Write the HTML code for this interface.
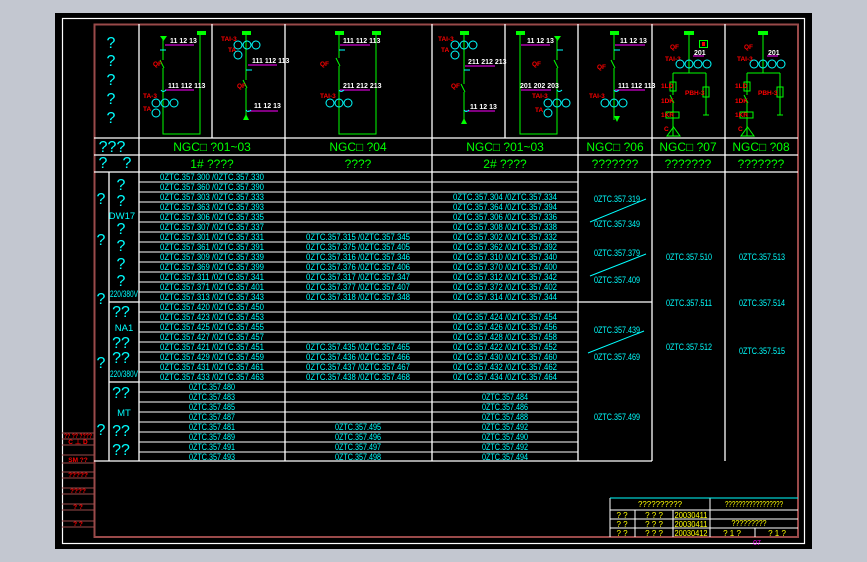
<!DOCTYPE html>
<html><head><meta charset="utf-8"><style>
html,body{margin:0;padding:0;background:#c3c7d0;}
svg{display:block;}
text{font-family:"Liberation Sans","Noto Sans CJK SC",sans-serif;}
.c{fill:#00ffff;font-size:9.5px;}
.g{fill:#00ff00;font-size:12px;}
.w{fill:#fff;font-size:7px;font-weight:bold;}
.r{fill:#ff0000;font-size:6.5px;font-weight:bold;}
.y{fill:#ffff00;font-size:8px;}
.q{fill:#00ffff;font-size:16px;}
</style></head><body>
<svg width="867" height="562" viewBox="0 0 867 562" xmlns="http://www.w3.org/2000/svg">
<rect x="0" y="0" width="867" height="562" fill="#c3c7d0"/>
<rect x="55" y="13" width="757" height="536" fill="#000"/>
<rect x="62.5" y="18.5" width="742" height="525" fill="none" stroke="#fff" stroke-width="1.2"/>
<rect x="94.5" y="24.5" width="703.5" height="512.5" fill="none" stroke="#9a4a4a" stroke-width="2"/>

<g stroke="#9a4a4a" stroke-width="1">
<line x1="62" y1="433" x2="94" y2="433"/><line x1="62" y1="439" x2="94" y2="439"/><line x1="62" y1="445" x2="94" y2="445"/>
<line x1="62" y1="455" x2="94" y2="455"/><line x1="62" y1="463" x2="94" y2="463"/><line x1="62" y1="472" x2="94" y2="472"/>
<line x1="62" y1="478" x2="94" y2="478"/><line x1="62" y1="488" x2="94" y2="488"/><line x1="62" y1="494" x2="94" y2="494"/>
<line x1="62" y1="504" x2="94" y2="504"/><line x1="62" y1="510" x2="94" y2="510"/><line x1="62" y1="521" x2="94" y2="521"/>
<line x1="62" y1="527" x2="94" y2="527"/>
</g>
<text class="r" x="78" y="438" text-anchor="middle" textLength="28" lengthAdjust="spacingAndGlyphs">?? ?? ????</text>
<text class="r" x="78" y="444" text-anchor="middle">C ⊥ D</text>
<text class="r" x="78" y="462" text-anchor="middle">SM   ??</text>
<text class="r" x="78" y="477" text-anchor="middle">?????</text>
<text class="r" x="78" y="493" text-anchor="middle">????</text>
<text class="r" x="78" y="509" text-anchor="middle">?   ?</text>
<text class="r" x="78" y="526" text-anchor="middle">?   ?</text>

<g stroke="#fff" stroke-width="1.3">
<line x1="139" y1="24" x2="139" y2="461"/>
<line x1="212" y1="24" x2="212" y2="138"/>
<line x1="285" y1="24" x2="285" y2="461"/>
<line x1="432" y1="24" x2="432" y2="461"/>
<line x1="505" y1="24" x2="505" y2="138"/>
<line x1="578" y1="24" x2="578" y2="461"/>
<line x1="652" y1="24" x2="652" y2="461"/>
<line x1="725" y1="24" x2="725" y2="461"/>
<line x1="94" y1="138" x2="798" y2="138"/>
<line x1="94" y1="155" x2="798" y2="155"/>
<line x1="94" y1="172" x2="798" y2="172"/>
<line x1="109" y1="172" x2="109" y2="461"/>
<line x1="109" y1="302" x2="139" y2="302"/>
<line x1="109" y1="382" x2="139" y2="382"/>
<line x1="578" y1="302" x2="652" y2="302"/>
<line x1="94" y1="461" x2="652" y2="461"/>
</g>
<g stroke="#fff" stroke-width="1">
<path d="M139 182H578M139 192H578M139 202H578M139 212H578M139 222H578M139 232H578M139 242H578M139 252H578M139 262H578M139 272H578M139 282H578M139 292H578M139 302H578M139 312H578M139 322H578M139 332H578M139 342H578M139 352H578M139 362H578M139 372H578M139 382H578M139 392H578M139 402H578M139 412H578M139 422H578M139 432H578M139 442H578M139 452H578"/>
</g>

<text class="q" x="112" y="152" text-anchor="middle" font-size="13">???</text>
<text class="g" x="212" y="151" text-anchor="middle">NGC□ ?01~03</text>
<text class="g" x="358" y="151" text-anchor="middle">NGC□ ?04</text>
<text class="g" x="505" y="151" text-anchor="middle">NGC□ ?01~03</text>
<text class="g" x="615" y="151" text-anchor="middle">NGC□ ?06</text>
<text class="g" x="688" y="151" text-anchor="middle">NGC□ ?07</text>
<text class="g" x="761" y="151" text-anchor="middle">NGC□ ?08</text>
<text class="q" x="103" y="168" text-anchor="middle" font-size="13">?</text>
<text class="q" x="127" y="168" text-anchor="middle" font-size="13">?</text>
<text class="g" x="212" y="168" text-anchor="middle">1# ????</text>
<text class="g" x="358" y="168" text-anchor="middle">????</text>
<text class="g" x="505" y="168" text-anchor="middle">2# ????</text>
<text class="g" x="615" y="168" text-anchor="middle">???????</text>
<text class="g" x="688" y="168" text-anchor="middle">???????</text>
<text class="g" x="761" y="168" text-anchor="middle">???????</text>

<text class="q" x="111" y="48" text-anchor="middle">?</text>
<text class="q" x="111" y="66" text-anchor="middle">?</text>
<text class="q" x="111" y="85" text-anchor="middle">?</text>
<text class="q" x="111" y="104" text-anchor="middle">?</text>
<text class="q" x="111" y="123" text-anchor="middle">?</text>

<text class="q" x="101" y="204" text-anchor="middle">?</text>
<text class="q" x="101" y="245" text-anchor="middle">?</text>
<text class="q" x="101" y="304" text-anchor="middle">?</text>
<text class="q" x="101" y="368" text-anchor="middle">?</text>
<text class="q" x="101" y="435" text-anchor="middle">?</text>
<text class="q" x="121" y="190" text-anchor="middle">?</text>
<text class="q" x="121" y="206" text-anchor="middle">?</text>
<text class="c" x="122" y="219" text-anchor="middle" font-size="12">DW17</text>
<text class="q" x="121" y="234" text-anchor="middle">?</text>
<text class="q" x="121" y="251" text-anchor="middle">?</text>
<text class="q" x="121" y="269" text-anchor="middle">?</text>
<text class="q" x="121" y="286" text-anchor="middle">?</text>
<text class="c" x="124" y="297" text-anchor="middle" font-size="8.5" textLength="28" lengthAdjust="spacingAndGlyphs">220/380V</text>
<text class="q" x="121" y="317" text-anchor="middle">??</text>
<text class="c" x="124" y="331" text-anchor="middle" font-size="12">NA1</text>
<text class="q" x="121" y="348" text-anchor="middle">??</text>
<text class="q" x="121" y="363" text-anchor="middle">??</text>
<text class="c" x="124" y="377" text-anchor="middle" font-size="8.5" textLength="28" lengthAdjust="spacingAndGlyphs">220/380V</text>
<text class="q" x="121" y="398" text-anchor="middle">??</text>
<text class="c" x="124" y="416" text-anchor="middle" font-size="12">MT</text>
<text class="q" x="121" y="436" text-anchor="middle">??</text>
<text class="q" x="121" y="455" text-anchor="middle">??</text>

<g class="c" text-anchor="middle">
<text x="212" y="180" textLength="104" lengthAdjust="spacingAndGlyphs">0ZTC.357.300 /0ZTC.357.330</text>
<text x="212" y="190" textLength="104" lengthAdjust="spacingAndGlyphs">0ZTC.357.360 /0ZTC.357.390</text>
<text x="212" y="200" textLength="104" lengthAdjust="spacingAndGlyphs">0ZTC.357.303 /0ZTC.357.333</text>
<text x="212" y="210" textLength="104" lengthAdjust="spacingAndGlyphs">0ZTC.357.363 /0ZTC.357.393</text>
<text x="212" y="220" textLength="104" lengthAdjust="spacingAndGlyphs">0ZTC.357.306 /0ZTC.357.335</text>
<text x="212" y="230" textLength="104" lengthAdjust="spacingAndGlyphs">0ZTC.357.307 /0ZTC.357.337</text>
<text x="212" y="240" textLength="104" lengthAdjust="spacingAndGlyphs">0ZTC.357.301 /0ZTC.357.331</text>
<text x="212" y="250" textLength="104" lengthAdjust="spacingAndGlyphs">0ZTC.357.361 /0ZTC.357.391</text>
<text x="212" y="260" textLength="104" lengthAdjust="spacingAndGlyphs">0ZTC.357.309 /0ZTC.357.339</text>
<text x="212" y="270" textLength="104" lengthAdjust="spacingAndGlyphs">0ZTC.357.369 /0ZTC.357.399</text>
<text x="212" y="280" textLength="104" lengthAdjust="spacingAndGlyphs">0ZTC.357.311 /0ZTC.357.341</text>
<text x="212" y="290" textLength="104" lengthAdjust="spacingAndGlyphs">0ZTC.357.371 /0ZTC.357.401</text>
<text x="212" y="300" textLength="104" lengthAdjust="spacingAndGlyphs">0ZTC.357.313 /0ZTC.357.343</text>
<text x="212" y="310" textLength="104" lengthAdjust="spacingAndGlyphs">0ZTC.357.420 /0ZTC.357.450</text>
<text x="212" y="320" textLength="104" lengthAdjust="spacingAndGlyphs">0ZTC.357.423 /0ZTC.357.453</text>
<text x="212" y="330" textLength="104" lengthAdjust="spacingAndGlyphs">0ZTC.357.425 /0ZTC.357.455</text>
<text x="212" y="340" textLength="104" lengthAdjust="spacingAndGlyphs">0ZTC.357.427 /0ZTC.357.457</text>
<text x="212" y="350" textLength="104" lengthAdjust="spacingAndGlyphs">0ZTC.357.421 /0ZTC.357.451</text>
<text x="212" y="360" textLength="104" lengthAdjust="spacingAndGlyphs">0ZTC.357.429 /0ZTC.357.459</text>
<text x="212" y="370" textLength="104" lengthAdjust="spacingAndGlyphs">0ZTC.357.431 /0ZTC.357.461</text>
<text x="212" y="380" textLength="104" lengthAdjust="spacingAndGlyphs">0ZTC.357.433 /0ZTC.357.463</text>
<text x="212" y="390" textLength="46" lengthAdjust="spacingAndGlyphs">0ZTC.357.480</text>
<text x="212" y="400" textLength="46" lengthAdjust="spacingAndGlyphs">0ZTC.357.483</text>
<text x="212" y="410" textLength="46" lengthAdjust="spacingAndGlyphs">0ZTC.357.485</text>
<text x="212" y="420" textLength="46" lengthAdjust="spacingAndGlyphs">0ZTC.357.487</text>
<text x="212" y="430" textLength="46" lengthAdjust="spacingAndGlyphs">0ZTC.357.481</text>
<text x="212" y="440" textLength="46" lengthAdjust="spacingAndGlyphs">0ZTC.357.489</text>
<text x="212" y="450" textLength="46" lengthAdjust="spacingAndGlyphs">0ZTC.357.491</text>
<text x="212" y="460" textLength="46" lengthAdjust="spacingAndGlyphs">0ZTC.357.493</text>
<text x="358" y="240" textLength="104" lengthAdjust="spacingAndGlyphs">0ZTC.357.315 /0ZTC.357.345</text>
<text x="358" y="250" textLength="104" lengthAdjust="spacingAndGlyphs">0ZTC.357.375 /0ZTC.357.405</text>
<text x="358" y="260" textLength="104" lengthAdjust="spacingAndGlyphs">0ZTC.357.316 /0ZTC.357.346</text>
<text x="358" y="270" textLength="104" lengthAdjust="spacingAndGlyphs">0ZTC.357.376 /0ZTC.357.406</text>
<text x="358" y="280" textLength="104" lengthAdjust="spacingAndGlyphs">0ZTC.357.317 /0ZTC.357.347</text>
<text x="358" y="290" textLength="104" lengthAdjust="spacingAndGlyphs">0ZTC.357.377 /0ZTC.357.407</text>
<text x="358" y="300" textLength="104" lengthAdjust="spacingAndGlyphs">0ZTC.357.318 /0ZTC.357.348</text>
<text x="358" y="350" textLength="104" lengthAdjust="spacingAndGlyphs">0ZTC.357.435 /0ZTC.357.465</text>
<text x="358" y="360" textLength="104" lengthAdjust="spacingAndGlyphs">0ZTC.357.436 /0ZTC.357.466</text>
<text x="358" y="370" textLength="104" lengthAdjust="spacingAndGlyphs">0ZTC.357.437 /0ZTC.357.467</text>
<text x="358" y="380" textLength="104" lengthAdjust="spacingAndGlyphs">0ZTC.357.438 /0ZTC.357.468</text>
<text x="358" y="430" textLength="46" lengthAdjust="spacingAndGlyphs">0ZTC.357.495</text>
<text x="358" y="440" textLength="46" lengthAdjust="spacingAndGlyphs">0ZTC.357.496</text>
<text x="358" y="450" textLength="46" lengthAdjust="spacingAndGlyphs">0ZTC.357.497</text>
<text x="358" y="460" textLength="46" lengthAdjust="spacingAndGlyphs">0ZTC.357.498</text>
<text x="505" y="200" textLength="104" lengthAdjust="spacingAndGlyphs">0ZTC.357.304 /0ZTC.357.334</text>
<text x="505" y="210" textLength="104" lengthAdjust="spacingAndGlyphs">0ZTC.357.364 /0ZTC.357.394</text>
<text x="505" y="220" textLength="104" lengthAdjust="spacingAndGlyphs">0ZTC.357.306 /0ZTC.357.336</text>
<text x="505" y="230" textLength="104" lengthAdjust="spacingAndGlyphs">0ZTC.357.308 /0ZTC.357.338</text>
<text x="505" y="240" textLength="104" lengthAdjust="spacingAndGlyphs">0ZTC.357.302 /0ZTC.357.332</text>
<text x="505" y="250" textLength="104" lengthAdjust="spacingAndGlyphs">0ZTC.357.362 /0ZTC.357.392</text>
<text x="505" y="260" textLength="104" lengthAdjust="spacingAndGlyphs">0ZTC.357.310 /0ZTC.357.340</text>
<text x="505" y="270" textLength="104" lengthAdjust="spacingAndGlyphs">0ZTC.357.370 /0ZTC.357.400</text>
<text x="505" y="280" textLength="104" lengthAdjust="spacingAndGlyphs">0ZTC.357.312 /0ZTC.357.342</text>
<text x="505" y="290" textLength="104" lengthAdjust="spacingAndGlyphs">0ZTC.357.372 /0ZTC.357.402</text>
<text x="505" y="300" textLength="104" lengthAdjust="spacingAndGlyphs">0ZTC.357.314 /0ZTC.357.344</text>
<text x="505" y="320" textLength="104" lengthAdjust="spacingAndGlyphs">0ZTC.357.424 /0ZTC.357.454</text>
<text x="505" y="330" textLength="104" lengthAdjust="spacingAndGlyphs">0ZTC.357.426 /0ZTC.357.456</text>
<text x="505" y="340" textLength="104" lengthAdjust="spacingAndGlyphs">0ZTC.357.428 /0ZTC.357.458</text>
<text x="505" y="350" textLength="104" lengthAdjust="spacingAndGlyphs">0ZTC.357.422 /0ZTC.357.452</text>
<text x="505" y="360" textLength="104" lengthAdjust="spacingAndGlyphs">0ZTC.357.430 /0ZTC.357.460</text>
<text x="505" y="370" textLength="104" lengthAdjust="spacingAndGlyphs">0ZTC.357.432 /0ZTC.357.462</text>
<text x="505" y="380" textLength="104" lengthAdjust="spacingAndGlyphs">0ZTC.357.434 /0ZTC.357.464</text>
<text x="505" y="400" textLength="46" lengthAdjust="spacingAndGlyphs">0ZTC.357.484</text>
<text x="505" y="410" textLength="46" lengthAdjust="spacingAndGlyphs">0ZTC.357.486</text>
<text x="505" y="420" textLength="46" lengthAdjust="spacingAndGlyphs">0ZTC.357.488</text>
<text x="505" y="430" textLength="46" lengthAdjust="spacingAndGlyphs">0ZTC.357.492</text>
<text x="505" y="440" textLength="46" lengthAdjust="spacingAndGlyphs">0ZTC.357.490</text>
<text x="505" y="450" textLength="46" lengthAdjust="spacingAndGlyphs">0ZTC.357.492</text>
<text x="505" y="460" textLength="46" lengthAdjust="spacingAndGlyphs">0ZTC.357.494</text>
<text x="617" y="202" textLength="46" lengthAdjust="spacingAndGlyphs">0ZTC.357.319</text>
<text x="617" y="227" textLength="46" lengthAdjust="spacingAndGlyphs">0ZTC.357.349</text>
<text x="617" y="256" textLength="46" lengthAdjust="spacingAndGlyphs">0ZTC.357.379</text>
<text x="617" y="283" textLength="46" lengthAdjust="spacingAndGlyphs">0ZTC.357.409</text>
<text x="617" y="333" textLength="46" lengthAdjust="spacingAndGlyphs">0ZTC.357.439</text>
<text x="617" y="360" textLength="46" lengthAdjust="spacingAndGlyphs">0ZTC.357.469</text>
<text x="617" y="420" textLength="46" lengthAdjust="spacingAndGlyphs">0ZTC.357.499</text>
<text x="689" y="260" textLength="46" lengthAdjust="spacingAndGlyphs">0ZTC.357.510</text>
<text x="689" y="306" textLength="46" lengthAdjust="spacingAndGlyphs">0ZTC.357.511</text>
<text x="689" y="350" textLength="46" lengthAdjust="spacingAndGlyphs">0ZTC.357.512</text>
<text x="762" y="260" textLength="46" lengthAdjust="spacingAndGlyphs">0ZTC.357.513</text>
<text x="762" y="306" textLength="46" lengthAdjust="spacingAndGlyphs">0ZTC.357.514</text>
<text x="762" y="354" textLength="46" lengthAdjust="spacingAndGlyphs">0ZTC.357.515</text>
</g>
<g stroke="#00ffff" stroke-width="1">
<line x1="590" y1="222" x2="646" y2="199"/>
<line x1="590" y1="276" x2="646" y2="254"/>
<line x1="588" y1="353" x2="644" y2="331"/>
</g>

<g fill="#00ff00">
<rect x="197" y="31" width="9" height="4"/>
<rect x="242" y="31" width="9" height="4"/>
<rect x="335" y="31" width="9" height="4"/>
<rect x="372" y="31" width="9" height="4"/>
<rect x="460" y="31" width="9" height="4"/>
<rect x="516" y="31" width="9" height="4"/>
<rect x="610" y="31" width="9" height="4"/>
<rect x="684" y="31" width="10" height="4"/>
<rect x="758" y="31" width="10" height="4"/>
<path d="M160 36h7l-3.5 5z"/><path d="M554 36h7l-3.5 5z"/>
<path d="M246 114l-3 6h6z"/><path d="M464 118l-3 6h6z"/><path d="M614 116h6l-3 6z"/>
</g>
<g stroke="#00ff00" stroke-width="1" fill="none">
<path d="M200 35V134H163V40"/>
<path d="M246 35V118"/>
<path d="M339 35V134H376V35"/>
<path d="M464 35V120"/>
<path d="M520 35V134H557V40"/>
<path d="M614 35V120"/>
<path d="M689 35V73M673 73H706M673 73V136M706 73V115M703 115h6"/>
<path d="M763 35V73M747 73H780M747 73V136M780 73V115M777 115h6"/>
<rect x="670" y="82" width="6" height="9"/><rect x="703" y="87" width="6" height="10"/>
<rect x="666" y="112" width="13" height="6"/><path d="M667 136h13l-6.5-9z"/>
<rect x="744" y="82" width="6" height="9"/><rect x="777" y="87" width="6" height="10"/>
<rect x="740" y="112" width="13" height="6"/><path d="M741 136h13l-6.5-9z"/>
</g>
<g stroke="#000" stroke-width="3">
<path d="M163 60v8M246 80v8M339 58v8M464 84v8M557 60v8M614 60v8M673 95v8M747 95v8"/>
</g>
<g stroke="#00ff00" stroke-width="1">
<path d="M160 60l4 8M243 80l4 8M336 58l4 8M461 84l4 8M554 60l4 8M611 60l4 8M670 95l4 8M744 95l4 8"/>
</g>
<g stroke="#ff00ff" stroke-width="1">
<path d="M165 45H194M165 90H194M248 65H277M248 111H278M340 45H370M340 90H370M465 66H495M465 111H495M521 45H550M521 90H551M615 45H645M615 90H645M693 56H704M767 56H778"/>
</g>
<rect x="699.5" y="40.5" width="8" height="7" fill="none" stroke="#00ff00"/>
<rect x="702" y="42" width="3" height="4" fill="#ff0000"/>
<g class="w" font-size="6.5">
<text x="170" y="43">11 12 13</text><text x="168" y="88">111 112 113</text>
<text x="252" y="63">111 112 113</text><text x="254" y="108">11 12 13</text>
<text x="343" y="43">111 112 113</text><text x="343" y="88">211 212 213</text>
<text x="468" y="64">211 212 213</text><text x="470" y="109">11 12 13</text>
<text x="527" y="43">11 12 13</text><text x="520" y="88">201 202 203</text>
<text x="620" y="43">11 12 13</text><text x="618" y="88">111 112 113</text>
<text x="694" y="55">201</text><text x="768" y="55">201</text>
</g>
<g class="r">
<text x="153" y="66">QF</text><text x="143" y="98">TA-3</text><text x="143" y="111">TA</text>
<text x="221" y="41">TAI-3</text><text x="228" y="52">TA</text><text x="237" y="88">QF</text>
<text x="320" y="66">QF</text><text x="320" y="98">TAI-3</text>
<text x="438" y="41">TAI-3</text><text x="441" y="52">TA</text><text x="451" y="88">QF</text>
<text x="532" y="66">QF</text><text x="532" y="98">TAI-3</text><text x="535" y="112">TA</text>
<text x="597" y="69">QF</text><text x="589" y="98">TAI-3</text>
<text x="670" y="49">QF</text><text x="665" y="61">TAI-3</text><text x="661" y="88">1LD</text><text x="661" y="103">1DK</text><text x="661" y="117">1KR</text><text x="664" y="131">C</text><text x="685" y="95">PBH-3</text>
<text x="744" y="49">QF</text><text x="737" y="61">TAI-3</text><text x="735" y="88">1LD</text><text x="735" y="103">1DK</text><text x="735" y="117">1KR</text><text x="738" y="131">C</text><text x="758" y="95">PBH-3</text>
</g>
<g stroke="#00ffff" stroke-width="1" fill="none">
<circle cx="156" cy="103" r="4"/><circle cx="165" cy="103" r="4"/><circle cx="174" cy="103" r="4"/><circle cx="156" cy="113" r="4"/>
<circle cx="238" cy="45" r="4"/><circle cx="247" cy="45" r="4"/><circle cx="256" cy="45" r="4"/><circle cx="238" cy="55" r="4"/>
<circle cx="330" cy="103" r="4"/><circle cx="339" cy="103" r="4"/><circle cx="348" cy="103" r="4"/>
<circle cx="455" cy="45" r="4"/><circle cx="464" cy="45" r="4"/><circle cx="473" cy="45" r="4"/><circle cx="455" cy="55" r="4"/>
<circle cx="548" cy="103" r="4"/><circle cx="557" cy="103" r="4"/><circle cx="566" cy="103" r="4"/><circle cx="548" cy="113" r="4"/>
<circle cx="605" cy="103" r="4"/><circle cx="614" cy="103" r="4"/><circle cx="623" cy="103" r="4"/>
<circle cx="680" cy="64" r="4"/><circle cx="689" cy="64" r="4"/><circle cx="698" cy="64" r="4"/><circle cx="707" cy="64" r="4"/>
<circle cx="754" cy="64" r="4"/><circle cx="763" cy="64" r="4"/><circle cx="772" cy="64" r="4"/><circle cx="781" cy="64" r="4"/>
<path d="M160 50h6M246 70h6M339 50h6M464 70h6M557 50h6M614 50h6"/>
<path d="M161 90q2 3 5 0M246 110q2 3 5 0M339 90q2 3 5 0M464 110q2 3 5 0M557 90q2 3 5 0M614 90q2 3 5 0"/>
</g>

<g stroke="#fff" stroke-width="1" fill="none">
<path d="M610 498V537M610 510H798M610 519H798M610 528H798M635 510V537M673 510V537M710 498V537M755 528V537"/>
</g>
<line x1="610" y1="498" x2="798" y2="498" stroke="#00ffff" stroke-width="1"/>
<g class="y">
<text x="660" y="507" text-anchor="middle" textLength="44" lengthAdjust="spacingAndGlyphs">??????????</text>
<text x="754" y="507" text-anchor="middle" textLength="58" lengthAdjust="spacingAndGlyphs">?????????????????</text>
<text x="622" y="518" text-anchor="middle">? ?</text><text x="654" y="518" text-anchor="middle">? ? ?</text><text x="691" y="518" text-anchor="middle" textLength="33" lengthAdjust="spacingAndGlyphs">20030411</text>
<text x="622" y="527" text-anchor="middle">? ?</text><text x="654" y="527" text-anchor="middle">? ? ?</text><text x="691" y="527" text-anchor="middle" textLength="33" lengthAdjust="spacingAndGlyphs">20030411</text>
<text x="749" y="526" text-anchor="middle" textLength="35" lengthAdjust="spacingAndGlyphs">?????????</text>
<text x="622" y="536" text-anchor="middle">? ?</text><text x="654" y="536" text-anchor="middle">? ? ?</text><text x="691" y="536" text-anchor="middle" textLength="33" lengthAdjust="spacingAndGlyphs">20030412</text>
<text x="732" y="536" text-anchor="middle">?   1   ?</text><text x="777" y="536" text-anchor="middle">?   1   ?</text>
</g>
<text x="757" y="545" fill="#ff00ff" font-size="7" text-anchor="middle">07</text>
</svg>
</body></html>
